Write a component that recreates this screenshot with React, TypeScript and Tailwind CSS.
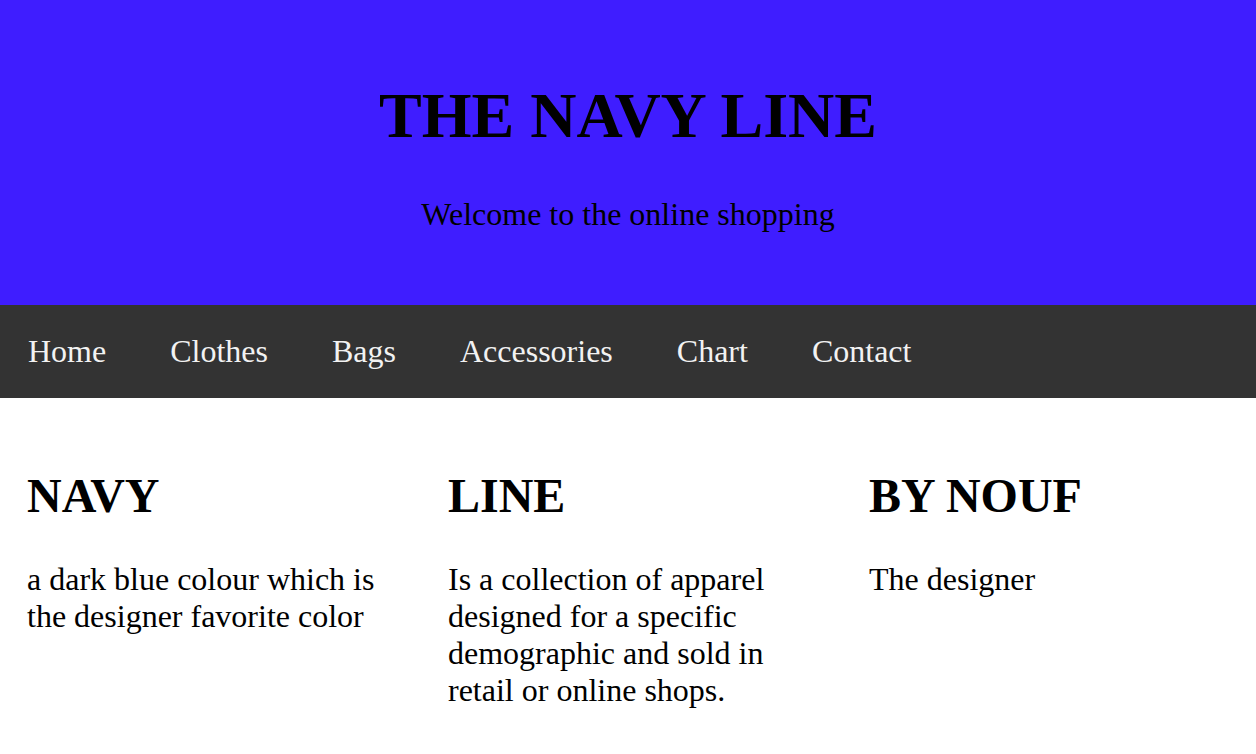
const links = ["Home", "Clothes", "Bags", "Accessories", "Chart", "Contact"];

const columns = [
  { title: "NAVY", text: "a dark blue colour which is the designer favorite color" },
  {
    title: "LINE",
    text: "Is a collection of apparel designed for a specific demographic and sold in retail or online shops.",
  },
  { title: "BY NOUF", text: "The designer" },
];

export default function App() {
  return (
    <div className="min-h-[754px] bg-white text-black font-['Liberation_Serif',_'Times_New_Roman',_serif]">
      <div className="bg-[#3f1dff] text-center pt-[36px] pb-[40px]">
        <h1 className="text-[64px] font-bold leading-[normal] my-[43px]">THE NAVY LINE</h1>
        <p className="text-[32px] leading-[normal] my-[32px]">Welcome to the online shopping</p>
      </div>

      <nav className="bg-[#333333] flex gap-[64px] px-[28px]">
        {links.map((l) => (
          <a key={l} href="#" className="block py-[28px] text-[32px] leading-[normal] text-[#f2f2f2]">
            {l}
          </a>
        ))}
      </nav>

      <div className="flex">
        {columns.map((c) => (
          <div key={c.title} className="w-[421px] shrink-0 px-[27px] pt-[30px]">
            <h2 className="text-[48px] font-bold leading-[normal] mt-[40px] mb-[38px]">{c.title}</h2>
            <p className="text-[32px] leading-[normal]">{c.text}</p>
          </div>
        ))}
      </div>
    </div>
  );
}
